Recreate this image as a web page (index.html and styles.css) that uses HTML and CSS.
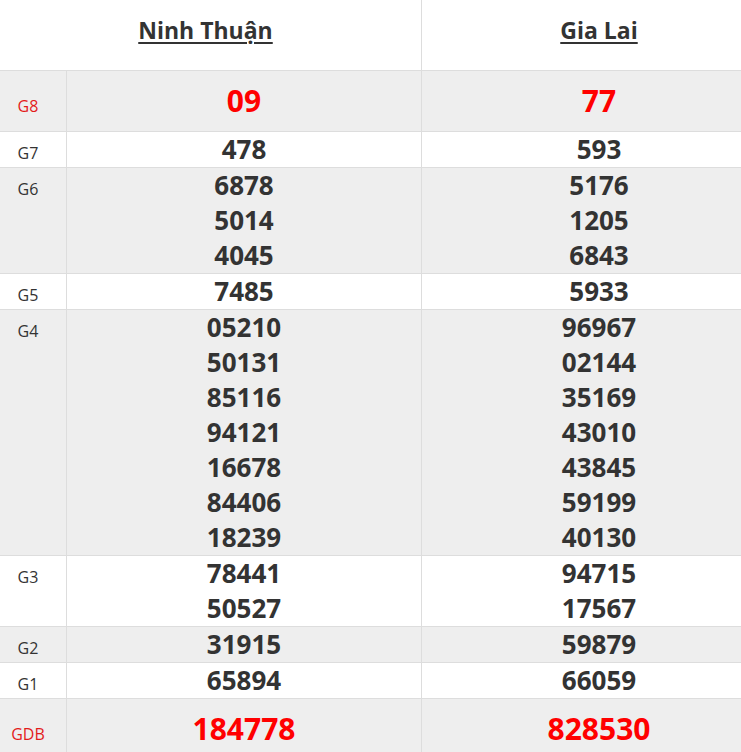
FILE: index.html
```
<!DOCTYPE html>
<html lang="vi">
<head>
<meta charset="utf-8">
<title>Kết quả xổ số</title>
<link rel="stylesheet" href="styles.css">
</head>
<body>
<table class="kq">
  <colgroup>
    <col class="c-label">
    <col class="c-prov">
    <col class="c-prov">
  </colgroup>
  <thead>
    <tr>
      <th class="head head-first" colspan="2"><a class="prov-link">Ninh Thuận</a></th>
      <th class="head"><a class="prov-link">Gia Lai</a></th>
    </tr>
  </thead>
  <tbody>
    <tr class="alt big">
      <td class="lbl red">G8</td>
      <td class="num red"><div>09</div></td>
      <td class="num red"><div>77</div></td>
    </tr>
    <tr>
      <td class="lbl">G7</td>
      <td class="num"><div>478</div></td>
      <td class="num"><div>593</div></td>
    </tr>
    <tr class="alt">
      <td class="lbl">G6</td>
      <td class="num"><div>6878</div><div>5014</div><div>4045</div></td>
      <td class="num"><div>5176</div><div>1205</div><div>6843</div></td>
    </tr>
    <tr>
      <td class="lbl">G5</td>
      <td class="num"><div>7485</div></td>
      <td class="num"><div>5933</div></td>
    </tr>
    <tr class="alt">
      <td class="lbl">G4</td>
      <td class="num"><div>05210</div><div>50131</div><div>85116</div><div>94121</div><div>16678</div><div>84406</div><div>18239</div></td>
      <td class="num"><div>96967</div><div>02144</div><div>35169</div><div>43010</div><div>43845</div><div>59199</div><div>40130</div></td>
    </tr>
    <tr>
      <td class="lbl">G3</td>
      <td class="num"><div>78441</div><div>50527</div></td>
      <td class="num"><div>94715</div><div>17567</div></td>
    </tr>
    <tr class="alt">
      <td class="lbl">G2</td>
      <td class="num"><div>31915</div></td>
      <td class="num"><div>59879</div></td>
    </tr>
    <tr>
      <td class="lbl">G1</td>
      <td class="num"><div>65894</div></td>
      <td class="num"><div>66059</div></td>
    </tr>
    <tr class="alt big">
      <td class="lbl red">GDB</td>
      <td class="num red"><div>184778</div></td>
      <td class="num red"><div>828530</div></td>
    </tr>
  </tbody>
</table>
</body>
</html>
```

FILE: styles.css
```
html, body {
  margin: 0;
  padding: 0;
  overflow: hidden;
  background: #fff;
}

body {
  font-family: "Open Sans", "Noto Sans", sans-serif;
  color: #333;
}

.kq {
  border-collapse: separate;
  border-spacing: 0;
  table-layout: fixed;
  width: 776px;
}

.c-label { width: 66px; }
.c-prov { width: 355px; }

.kq th,
.kq td {
  box-sizing: border-box;
  padding: 0;
  vertical-align: baseline;
}

.kq .head {
  height: 70px;
  padding: 15px 0 25px 0;
  line-height: 30px;
  font-size: 23px;
  font-weight: 700;
  text-align: center;
  border-left: 1px solid #ddd;
}

.kq .head-first {
  border-left: none;
  padding-right: 10px;
}

.prov-link {
  color: #333;
  text-decoration: underline;
  text-underline-offset: 3px;
  text-decoration-thickness: 2px;
}

.kq tbody td {
  border-top: 1px solid #ddd;
}

.kq tbody td + td {
  border-left: 1px solid #ddd;
}

.alt td {
  background: #eee;
}

.kq .lbl {
  font-size: 16px;
  line-height: 20px;
  text-align: center;
  padding-right: 10px;
  color: #333;
}

.kq .lbl.red {
  color: #e31b1b;
}

.num {
  text-align: center;
  font-size: 26px;
  font-weight: 700;
  line-height: 35px;
}

.big .num {
  font-size: 30px;
  line-height: 60px;
}

.num.red {
  color: #f00;
}
```
